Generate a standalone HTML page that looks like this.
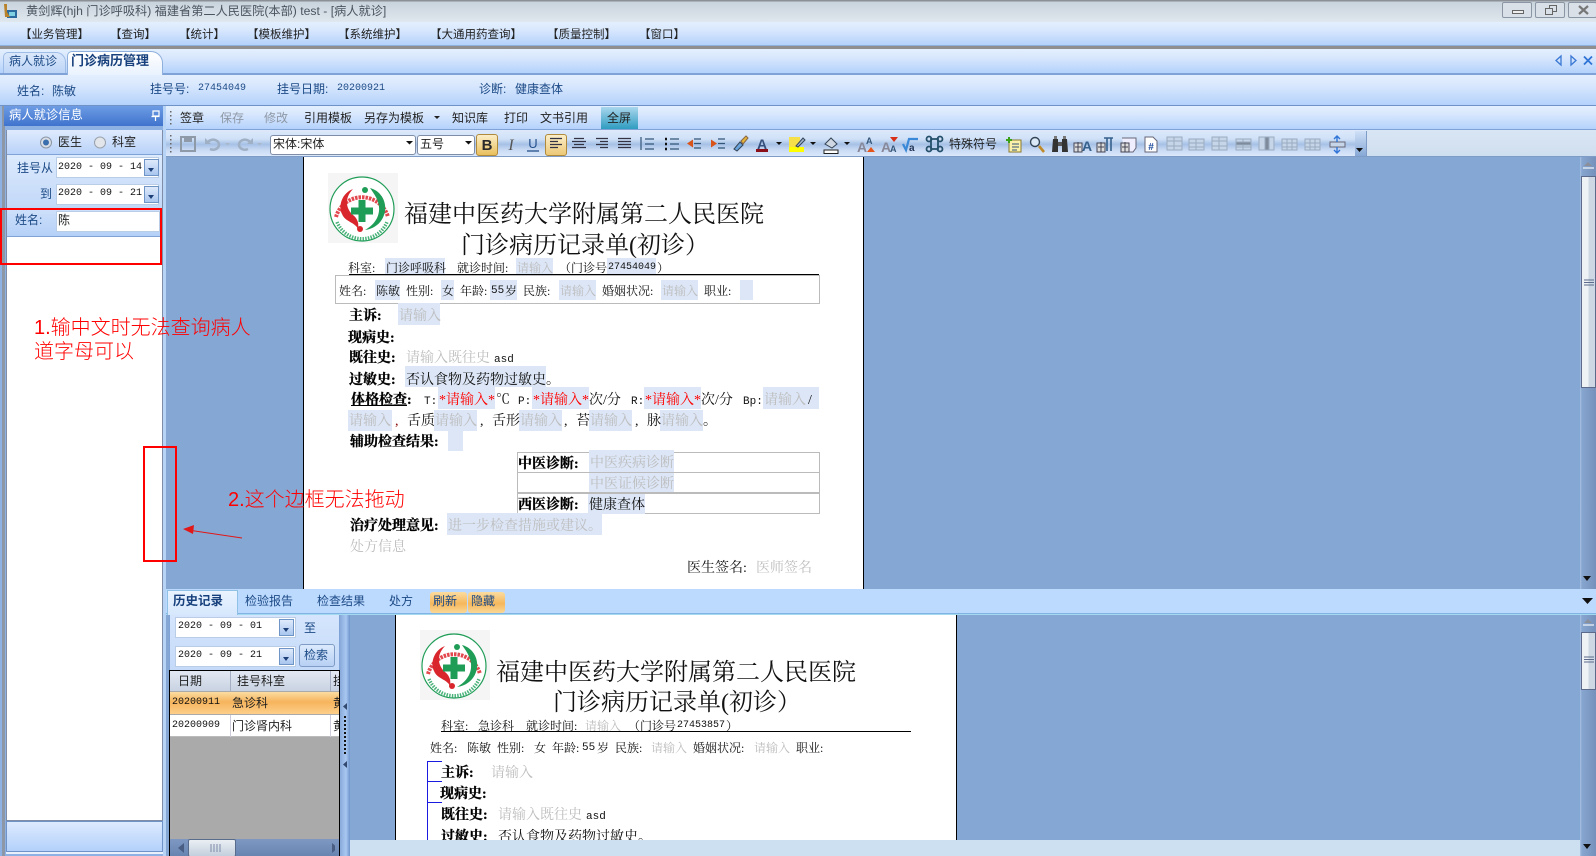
<!DOCTYPE html>
<html lang="zh-CN"><head><meta charset="utf-8"><title>病人就诊</title>
<style>
html,body{margin:0;padding:0;width:1596px;height:856px;overflow:hidden;background:#85a7d4}
body{position:relative;font-family:"Liberation Sans","Noto Sans CJK SC",sans-serif;font-size:12px;color:#000}
.b{position:absolute}
.t{position:absolute;white-space:nowrap;line-height:20px;height:20px;font-family:"Liberation Serif","Noto Serif CJK SC",serif;font-size:12px;color:#111}
.u{font-family:"Liberation Sans","Noto Sans CJK SC",sans-serif;color:#222}
.n{font-family:"Liberation Mono",monospace;font-size:10px}
.bl{color:#1c4a86}
.d{font-size:14px}
.h{font-weight:700;font-size:14px;color:#000;-webkit-text-stroke:.3px #000}
.g{color:#bdbdbd}
.hl{position:absolute;background:#dce6f6}
.r{color:#f00}
.ttl{font-size:24px;line-height:30px;height:30px;color:#111}
.doc .t{margin-top:2px}
.doc .t.m1{margin-top:1px}
.an{position:absolute;white-space:nowrap;color:#f00;font-size:20px;line-height:24px;font-family:"Liberation Sans","Noto Sans CJK SC",sans-serif;font-weight:300}
.date{position:absolute;background:#fff;border:1px solid #b9cde6;box-sizing:border-box}
.drop{position:absolute;width:15px;background:linear-gradient(#dfeafb,#a9c6ef);border:1px solid #6f94c6;box-sizing:border-box}
.drop:after{content:"";position:absolute;left:3px;top:8px;border:3.5px solid transparent;border-top:4px solid #1d3f78;border-bottom:0}
.bar{background:linear-gradient(#e3effe,#dbe9fd 30%,#b4d2fc)}
.m{font-size:11.5px;top:25px}
</style></head><body>

<!-- title bar -->
<div class="b" style="left:0;top:0;width:1596px;height:22px;background:linear-gradient(#8b9096 0,#8b9096 1px,#c9d3dc 2px,#e0e7ee 100%)"></div>
<svg class="b" style="left:2px;top:3px" width="16" height="16"><rect x="5" y="7" width="10" height="8" fill="#2a6a9e"/><rect x="7" y="9" width="6" height="4" fill="#7fd0e0"/><path d="M2 1l3 0 0 8 3 5-5 0z" fill="#b8832a"/></svg>
<div class="t u" style="left:26px;top:1px;font-size:12.2px;color:#4a5560">黄剑辉(hjh 门诊呼吸科) 福建省第二人民医院(本部) test - [病人就诊]</div>
<div class="b" style="left:1502px;top:2px;width:30px;height:16px;border:1px solid #8a96a4;border-radius:2px;background:#d9e0e7;box-sizing:border-box"><div class="b" style="left:9px;top:7px;width:10px;height:2px;border:1px solid #666;background:#eee"></div></div>
<div class="b" style="left:1535px;top:2px;width:30px;height:16px;border:1px solid #8a96a4;border-radius:2px;background:#d9e0e7;box-sizing:border-box"><div class="b" style="left:13px;top:2px;width:6px;height:5px;border:1.5px solid #666"></div><div class="b" style="left:9px;top:5px;width:6px;height:5px;border:1.5px solid #666;background:#d9e0e7"></div></div>
<div class="b" style="left:1568px;top:2px;width:29px;height:16px;border:1px solid #8a96a4;border-radius:2px;background:#d9e0e7;box-sizing:border-box"><svg class="b" style="left:9px;top:2px" width="11" height="10"><path d="M1 1l9 8M10 1L1 9" stroke="#777" stroke-width="2.200"/></svg></div>

<!-- menu -->
<div class="b bar" style="left:0;top:22px;width:1596px;height:24px;border-bottom:1px solid #8fb0dc;box-sizing:border-box"></div>
<div class="b" style="left:0;top:46px;width:1596px;height:3px;background:#8f8f8f"></div>
<div class="t u m" style="left:20px">【业务管理】</div>
<div class="t u m" style="left:110px">【查询】</div>
<div class="t u m" style="left:179px">【统计】</div>
<div class="t u m" style="left:247px">【模板维护】</div>
<div class="t u m" style="left:338px">【系统维护】</div>
<div class="t u m" style="left:430px">【大通用药查询】</div>
<div class="t u m" style="left:547px">【质量控制】</div>
<div class="t u m" style="left:639px">【窗口】</div>

<!-- tab strip -->
<div class="b bar" style="left:0;top:49px;width:1596px;height:24px"></div>
<div class="b" style="left:0;top:73px;width:1596px;height:2px;background:#7fa3d6"></div>
<div class="b" style="left:3px;top:52px;width:63px;height:21px;border:1px solid #9dbce6;border-bottom:0;border-radius:5px 10px 0 0;background:linear-gradient(#dbe8fb,#bdd5f7);box-sizing:border-box"></div>
<div class="b" style="left:67px;top:51px;width:96px;height:24px;border:1px solid #8fb0dc;border-bottom:0;border-radius:5px 12px 0 0;background:linear-gradient(#fff,#e9f2fe);box-sizing:border-box"></div>
<div class="t u bl" style="left:9px;top:51px;font-size:12px">病人就诊</div>
<div class="t u bl" style="left:71px;top:51px;font-size:13px;font-weight:700;color:#17407c">门诊病历管理</div>
<svg class="b" style="left:1552px;top:54px" width="42" height="13"><path d="M9 2L4 6.500 9 11z" fill="none" stroke="#3a78d4" stroke-width="1.300"/><path d="M19 2l5 4.500-5 4.500z" fill="none" stroke="#3a78d4" stroke-width="1.300"/><path d="M32 2.500l8 8M40 2.500l-8 8" stroke="#2f74d6" stroke-width="1.800"/></svg>

<!-- info bar -->
<div class="b bar" style="left:0;top:75px;width:1596px;height:30px"></div>
<div class="b" style="left:0;top:105px;width:1596px;height:1px;background:#6f93c6"></div>
<div class="t u bl" style="left:17px;top:81px">姓名:</div><div class="t u bl" style="left:52px;top:81px">陈敏</div>
<div class="t u bl" style="left:150px;top:79px">挂号号:</div><div class="t n bl" style="left:198px;top:79px">27454049</div>
<div class="t u bl" style="left:277px;top:79px">挂号日期:</div><div class="t n bl" style="left:337px;top:79px">20200921</div>
<div class="t u bl" style="left:479px;top:79px">诊断:</div><div class="t u bl" style="left:515px;top:79px">健康查体</div>

<!-- left panel -->
<div class="b" style="left:0;top:106px;width:166px;height:750px;background:#8db1e3"></div>
<div class="b" style="left:2px;top:106px;width:3px;height:750px;background:#8e97a6"></div>
<div class="b" style="left:4px;top:106px;width:161px;height:20px;background:linear-gradient(#6d9ce4,#3f73cd)"></div>
<div class="t u" style="left:9px;top:105px;font-size:12.300px;color:#fff">病人就诊信息</div>
<svg class="b" style="left:150px;top:109px" width="11" height="13"><path d="M3 2h6v5H3zM1.500 7.500h8M5.500 8v4" stroke="#fff" fill="none" stroke-width="1.200"/></svg>
<div class="b" style="left:6px;top:130px;width:157px;height:691px;background:#fff;border:1px solid #7f8ea6;box-sizing:border-box"></div>
<div class="b" style="left:7px;top:130px;width:155px;height:25px;background:linear-gradient(#dfeafd,#b9d3f9);border-bottom:1px solid #7fa3d6;box-sizing:border-box"></div>
<div class="b" style="left:7px;top:155px;width:155px;height:53px;background:linear-gradient(#dceafd,#c2d8f8)"></div>
<div class="b" style="left:7px;top:208px;width:155px;height:29px;background:linear-gradient(#cfe1fb,#b5d0f7);border-bottom:1px solid #7fa3d6;box-sizing:border-box"></div>
<svg class="b" style="left:39px;top:135px" width="70" height="15"><circle cx="7" cy="7.500" r="5.500" fill="#d8dee6" stroke="#8a96a6"/><circle cx="7" cy="7.500" r="3" fill="#3a6fae"/><circle cx="61" cy="7.500" r="5.500" fill="#e2e5e9" stroke="#9aa2ac"/></svg>
<div class="t u" style="left:58px;top:132px">医生</div>
<div class="t u" style="left:112px;top:132px">科室</div>
<div class="t u bl" style="left:17px;top:158px">挂号从</div>
<div class="date" style="left:56px;top:157px;width:103px;height:21px"></div><div class="drop" style="left:144px;top:159px;height:17px"></div>
<div class="t n" style="left:58px;top:158px">2020 - 09 - 14</div>
<div class="t u bl" style="left:40px;top:184px">到</div>
<div class="date" style="left:56px;top:184px;width:103px;height:21px"></div><div class="drop" style="left:144px;top:186px;height:17px"></div>
<div class="t n" style="left:58px;top:184px">2020 - 09 - 21</div>
<div class="t u bl" style="left:15px;top:210px">姓名:</div>
<div class="date" style="left:56px;top:211px;width:104px;height:21px"></div>
<div class="t u" style="left:58px;top:210px">陈</div>
<div class="b" style="left:6px;top:821px;width:157px;height:31px;background:linear-gradient(#ddeafe,#b3d1fb);border:1px solid #6f93c6;box-sizing:border-box"></div>
<div class="b" style="left:6px;top:852px;width:157px;height:2px;background:#e7f0fb"></div>
<div class="b" style="left:163px;top:106px;width:3px;height:750px;background:#b7d3f5"></div>

<!-- toolbars -->
<div class="b bar" style="left:166px;top:106px;width:1430px;height:24px;border-bottom:1px solid #7fa3d6;box-sizing:border-box"></div>
<div class="b" style="left:166px;top:130px;width:1430px;height:27px;background:linear-gradient(#d8e5f4,#d0dfef);border-bottom:1px solid #7f9cc6;box-sizing:border-box"></div>
<div class="b" style="left:166px;top:130px;width:1200px;height:27px;background:linear-gradient(#deeafb 0,#cfe0f7 35%,#a6c1e6 55%,#c7d9f3 75%,#dbe8fb 100%);border-bottom:1px solid #7f9cc6;box-sizing:border-box"></div>
<div class="b" style="left:1355px;top:131px;width:11px;height:25px;background:linear-gradient(#cfe0f7,#86a8d6);border-right:1px solid #7f9cc6"></div>
<div class="b" style="left:601px;top:107px;width:37px;height:22px;background:linear-gradient(#a9d6ee,#2f9cc0)"></div>
<div class="t u" style="left:180px;top:108px">签章</div>
<div class="t u" style="left:220px;top:108px;color:#8e98a6">保存</div>
<div class="t u" style="left:264px;top:108px;color:#8e98a6">修改</div>
<div class="t u" style="left:304px;top:108px">引用模板</div>
<div class="t u" style="left:364px;top:108px">另存为模板</div>
<div class="t u" style="left:452px;top:108px">知识库</div>
<div class="t u" style="left:504px;top:108px">打印</div>
<div class="t u" style="left:540px;top:108px">文书引用</div>
<div class="t u" style="left:607px;top:108px">全屏</div>

<div class="b" style="left:270px;top:135px;width:146px;height:20px;background:#fff;border:1px solid #7f8ea6;border-radius:3px;box-sizing:border-box"></div>
<div class="b" style="left:417px;top:135px;width:58px;height:20px;background:#fff;border:1px solid #7f8ea6;border-radius:3px;box-sizing:border-box"></div>
<div class="t u" style="left:273px;top:134px">宋体:宋体</div>
<div class="t u" style="left:420px;top:134px">五号</div>
<div class="t u" style="left:949px;top:134px">特殊符号</div>
<div class="b" style="left:476px;top:134px;width:22px;height:22px;background:linear-gradient(#fbeec8,#e9bf5d);border:1px solid #b08a3c;border-radius:3px;box-sizing:border-box"></div>
<div class="b" style="left:545px;top:134px;width:22px;height:22px;background:linear-gradient(#fbeec8,#ecc877);border:1px solid #b08a3c;border-radius:3px;box-sizing:border-box"></div>
<svg class="b" style="left:166px;top:106px" width="1200" height="51" fill="none" shape-rendering="geometricPrecision">
<g fill="#666"><rect x="4" y="5" width="1.500" height="1.500"/><rect x="4" y="9" width="1.500" height="1.500"/><rect x="4" y="13" width="1.500" height="1.500"/><rect x="4" y="17" width="1.500" height="1.500"/><rect x="4" y="29" width="1.500" height="1.500"/><rect x="4" y="33" width="1.500" height="1.500"/><rect x="4" y="37" width="1.500" height="1.500"/><rect x="4" y="41" width="1.500" height="1.500"/><rect x="4" y="45" width="1.500" height="1.500"/></g>
<path d="M268 10l3 3 3-3z" fill="#222"/>
<path d="M240 35l3.500 3.500 3.500-3.500z M299 35l3.500 3.500 3.500-3.500z" fill="#111"/>
<!-- save undo redo -->
<g transform="translate(22,38)"><rect x="-7" y="-7" width="14" height="14" stroke="#8f9aa8" stroke-width="2"/><rect x="-4" y="-7" width="8" height="5" fill="#8f9aa8"/></g>
<g transform="translate(47,38)"><path d="M-5 -2a6 5 0 1 1 2 7" stroke="#9fb0c4" stroke-width="2.500"/><path d="M-8-6v6h6z" fill="#9fb0c4"/></g>
<path d="M59 37l2.500 2.500 2.500-2.500z M91 37l2.500 2.500 2.500-2.500z" fill="#aab8ca"/>
<g transform="translate(79,38)"><path d="M5 -2a6 5 0 1 0 -2 7" stroke="#9fb0c4" stroke-width="2.500"/><path d="M8-6v6h-6z" fill="#9fb0c4"/></g>
<!-- B I U -->
<text x="321" y="44" text-anchor="middle" font-family="Liberation Sans" font-weight="700" font-size="15" fill="#2a2a2a">B</text>
<text x="345" y="44" text-anchor="middle" font-family="Liberation Serif" font-style="italic" font-size="16" fill="#555">I</text>
<text x="367" y="42" text-anchor="middle" font-family="Liberation Sans" font-size="13" fill="#24508c">U</text><path d="M361 45h12" stroke="#24508c" stroke-width="1.300"/>
<!-- alignment -->
<g stroke-width="1.200" stroke="#334">
<path d="M384 32.500h12M384 35.500h8M384 38.500h12M384 41.500h8"/>
<path d="M408 32.500h10M406 35.500h14M408 38.500h10M406 41.500h14" transform="translate(0,0)"/>
<path d="M430 32.500h12M434 35.500h8M430 38.500h12M434 41.500h8"/>
<path d="M452 32.500h13M452 35.500h13M452 38.500h13M452 41.500h13"/>
<path d="M475 31v13M479 33h9M479 38h9M479 43h9" stroke="#357"/>
<path d="M499 33h2M499 38h2M499 43h2" stroke="#111" stroke-width="2.400"/><path d="M504 33h9M504 38h9M504 43h9" stroke="#357"/>
</g>
<path d="M521 37.500l6-4v8z" fill="#d9541a"/><path d="M528 33h7M528 37.500h7M528 42h7" stroke="#357" stroke-width="1.200"/>
<path d="M551 37.500l-6-4v8z" fill="#d9541a"/><path d="M552 33h7M552 37.500h7M552 42h7" stroke="#357" stroke-width="1.200"/>
<!-- brush -->
<path d="M568 43l6-7 3 3-6 6z" fill="#6aa4dc" stroke="#345"/><path d="M575 35l5-5 2 2-5 6z" fill="#e5b53a" stroke="#864"/>
<!-- font colour A -->
<text x="596" y="43" text-anchor="middle" font-family="Liberation Sans" font-weight="700" font-size="14" fill="#35507c">A</text><rect x="590" y="43" width="12" height="3" fill="#8a0f18"/><path d="M610 36l3 3 3-3z" fill="#111"/>
<!-- highlighter -->
<rect x="623" y="31" width="11" height="10" fill="#f5e04a"/><rect x="623" y="41" width="15" height="5" fill="#ffff00"/><path d="M630 40l7-8 2 2-7 7z" fill="#9fb4cf" stroke="#345"/><path d="M644 36l3 3 3-3z" fill="#111"/>
<!-- fill -->
<path d="M659 38l6-6 6 6-5 4z" fill="#cfd8e2" stroke="#345"/><rect x="658" y="44" width="14" height="3.500" fill="#fff" stroke="#222"/><path d="M678 36l3 3 3-3z" fill="#111"/>
<g font-family="Liberation Sans" font-weight="700">
<!-- AA up -->
<text x="691" y="46" font-size="14" fill="#889">A</text><text x="700" y="38" font-size="9" fill="#357">A</text><path d="M701 46l4-5 4 5z" fill="#e5551a"/>
<!-- AA down -->
<text x="715" y="46" font-size="14" fill="#889">A</text><text x="724" y="46" font-size="9" fill="#357">A</text><path d="M724 31h8l-4 5z" fill="#d83018"/>
<!-- sqrt -->
<path d="M737 38l3 6 3-11h9" stroke="#3a88d8" stroke-width="2.200"/><text x="743" y="45" font-size="10" fill="#235">a</text>
<!-- cmd -->
<g stroke="#24506c" stroke-width="1.800"><circle cx="763" cy="33" r="2.500"/><circle cx="774" cy="33" r="2.500"/><circle cx="763" cy="43" r="2.500"/><circle cx="774" cy="43" r="2.500"/><path d="M765 33h7v10h-7z"/></g>
</g>
<!-- note -->
<g transform="translate(848,38)"><rect x="-5" y="-4" width="12" height="12" fill="#fbf1a8" stroke="#8a7a30"/><path d="M-2 0h7M-2 3h7M-2 6h5" stroke="#357"/><path d="M-8-4h6M-5-7v6" stroke="#3aa018" stroke-width="2"/></g>
<!-- magnifier -->
<g transform="translate(870,38)"><circle cx="-1" cy="-2" r="4.500" fill="#dbe9f7" stroke="#345" stroke-width="1.400"/><path d="M3 2l5 6" stroke="#c08a28" stroke-width="2.600"/></g>
<!-- binoculars -->
<g transform="translate(894,38)"><path d="M-7-5h5v13h-6zM2-5h5l1 13h-6z" fill="#333"/><rect x="-2" y="-2" width="4" height="4" fill="#555"/><rect x="-6" y="-8" width="3" height="3" fill="#777"/><rect x="3" y="-8" width="3" height="3" fill="#777"/></g>
<!-- cell A -->
<g transform="translate(916,38)"><rect x="-8" y="-1" width="8" height="9" fill="#ddd" stroke="#445"/><path d="M-4-2v10M-7 3h6" stroke="#445"/><text x="0" y="7" font-family="Liberation Sans" font-weight="700" font-size="14" fill="#35608c">A</text></g>
<!-- para -->
<g transform="translate(939,38)"><rect x="-8" y="-1" width="8" height="9" fill="#ddd" stroke="#445"/><path d="M-4-2v10M-7 3h6" stroke="#445"/><path d="M-1-6h9M2-6v13M6-6v13" stroke="#35608c" stroke-width="1.600"/></g>
<!-- page -->
<g transform="translate(963,38)"><path d="M-7-6h14v10l-3 4h-8" fill="#eef" stroke="#667"/><rect x="-8" y="-1" width="8" height="9" fill="#ddd" stroke="#445"/><path d="M-4-2v10M-7 3h6" stroke="#445"/></g>
<!-- page # -->
<g transform="translate(985,38)"><path d="M-6-7h8l4 4v11h-12z" fill="#fff" stroke="#667"/><text x="0" y="6" text-anchor="middle" font-family="Liberation Sans" font-weight="700" font-size="10" fill="#1c4a9c">#</text></g>
<!-- table icons disabled -->
<g stroke="#9aabc0" fill="#c6d5e8">
<g transform="translate(1009,38)"><rect x="-8" y="-7" width="15" height="13"/><path d="M-8-3h15M-8 2h15M-1-7v13"/></g>
<g transform="translate(1031,38)"><rect x="-8" y="-5" width="15" height="11"/><path d="M-8-1h15M-8 3h15M-1-5v11"/></g>
<g transform="translate(1054,38)"><rect x="-8" y="-7" width="15" height="13"/><path d="M-8-3h15M-8 2h15M-1-7v13"/></g>
<g transform="translate(1078,38)"><rect x="-8" y="-5" width="15" height="11"/><path d="M-8 3h15M-1-5v11"/><rect x="-8" y="-2" width="15" height="3" fill="#7e8b9c"/></g>
<g transform="translate(1101,38)"><rect x="-8" y="-7" width="15" height="13"/><rect x="-2" y="-7" width="4" height="13" fill="#7e8b9c"/></g>
<g transform="translate(1124,38)"><rect x="-8" y="-5" width="15" height="11"/><path d="M-8-1h15M-8 3h15M-3-5v11M2-5v11"/></g>
<g transform="translate(1147,38)"><rect x="-8" y="-5" width="15" height="11"/><path d="M-8-1h15M-8 3h15M-3-5v11M2-5v11"/></g>
</g>
<!-- row height -->
<g transform="translate(1171,38)"><rect x="-7" y="-2" width="15" height="5" fill="#c6d5e8" stroke="#667"/><path d="M0-8v6M0 3v6M-3-5l3-3 3 3M-3 6l3 3 3-3" stroke="#2f74d6" stroke-width="1.400"/></g>
<path d="M1190 42h7l-3.500 4z" fill="#111"/>
</svg>

<!-- main doc -->
<div class="b" style="left:166px;top:157px;width:1414px;height:432px;background:#85a7d4"></div>
<div class="b" style="left:303px;top:157px;width:561px;height:432px;background:#fff;border-left:1px solid #000;border-right:1px solid #000;box-sizing:border-box"></div>

<svg width="0" height="0" style="position:absolute"><defs>
<symbol id="logo" viewBox="0 0 70 70"><rect width="70" height="70" fill="#f5f5f5"/><circle cx="34" cy="36" r="32" fill="#fff" stroke="#1f9d57" stroke-width="1.200"/><path d="M8 44A27 27 0 0 1 60 44" fill="none" stroke="#e2484e" stroke-width="4" stroke-dasharray="2.500 1"/><path d="M9 49A27 27 0 0 0 59 49" fill="none" stroke="#4bb27b" stroke-width="3.500" stroke-dasharray="1.500 1.200"/><path d="M25 16C14 20 10 33 14 41c3 8 13 8 16 15 1-5 0-10-5-14-7-6-9-17 0-26z" fill="#d8262c"/><circle cx="32" cy="56" r="3" fill="#d8262c"/><path d="M42 15c12 3 18 16 14 27-3 9-11 14-19 15 7-4 13-10 14-19 1-9-4-16-9-23z" fill="#1f9d57"/><circle cx="37" cy="17" r="3" fill="#1f9d57"/><path d="M30.500 27h7v7.500H45v7h-7.500V49h-7v-7.500H23v-7h7.500z" fill="#1f9d57"/></symbol>
</defs></svg>

<svg class="b" style="left:328px;top:173px" width="70" height="70"><use href="#logo"/></svg>

<div class="doc">
<div class="t ttl" style="left:404px;top:198px">福建中医药大学附属第二人民医院</div>
<div class="t ttl" style="left:461px;top:229px">门诊病历记录单(初诊）</div>

<div class="hl" style="left:385px;top:258px;width:60px;height:16px"></div>
<div class="hl" style="left:516px;top:258px;width:37px;height:16px"></div>
<div class="hl" style="left:607px;top:258px;width:49px;height:16px"></div>
<div class="t m1" style="left:348px;top:257px">科室:</div>
<div class="t m1" style="left:386px;top:257px">门诊呼吸科</div>
<div class="t m1" style="left:457px;top:257px">就诊时间:</div>
<div class="t g m1" style="left:517px;top:257px">请输入</div>
<div class="t m1" style="left:559px;top:257px">（门诊号</div>
<div class="t n m1" style="left:608px;top:257px">27454049</div>
<div class="t m1" style="left:657px;top:257px">）</div>
<div class="b" style="left:349px;top:274px;width:470px;height:1px;background:#000"></div>
<div class="b" style="left:335px;top:275px;width:485px;height:29px;border:1px solid #bbb;box-sizing:border-box"></div>
<div class="hl" style="left:375px;top:280px;width:25px;height:20px"></div>
<div class="hl" style="left:441px;top:280px;width:13px;height:20px"></div>
<div class="hl" style="left:490px;top:280px;width:27px;height:20px"></div>
<div class="hl" style="left:559px;top:280px;width:37px;height:20px"></div>
<div class="hl" style="left:661px;top:280px;width:37px;height:20px"></div>
<div class="hl" style="left:740px;top:280px;width:13px;height:20px"></div>
<div class="t m1" style="left:339px;top:280px">姓名:</div><div class="t m1" style="left:376px;top:280px">陈敏</div>
<div class="t m1" style="left:406px;top:280px">性别:</div><div class="t m1" style="left:442px;top:280px">女</div>
<div class="t m1" style="left:460px;top:280px">年龄:</div><div class="t n m1" style="left:491px;top:280px;font-size:11px">55</div><div class="t m1" style="left:505px;top:280px">岁</div>
<div class="t m1" style="left:523px;top:280px">民族:</div><div class="t g m1" style="left:560px;top:280px">请输入</div>
<div class="t m1" style="left:602px;top:280px">婚姻状况:</div><div class="t g m1" style="left:662px;top:280px">请输入</div>
<div class="t m1" style="left:704px;top:280px">职业:</div>

<div class="hl" style="left:398px;top:303px;width:42px;height:22px"></div>
<div class="t h" style="left:349px;top:305px">主诉:</div><div class="t d g" style="left:399px;top:305px">请输入</div>
<div class="t h" style="left:348px;top:327px">现病史:</div>
<div class="t h" style="left:349px;top:347px">既往史:</div><div class="t d g" style="left:406px;top:347px">请输入既往史</div><div class="t n" style="left:494px;top:348px;font-size:11px">asd</div>
<div class="hl" style="left:405px;top:366px;width:141px;height:21px"></div>
<div class="t h" style="left:349px;top:369px">过敏史:</div><div class="t d" style="left:406px;top:369px">否认食物及药物过敏史。</div>

<div class="hl" style="left:438px;top:387px;width:57px;height:22px"></div>
<div class="hl" style="left:532px;top:387px;width:57px;height:22px"></div>
<div class="hl" style="left:644px;top:387px;width:57px;height:22px"></div>
<div class="hl" style="left:763px;top:387px;width:56px;height:22px"></div>
<div class="t h" style="left:351px;top:389px;text-decoration:underline">体格检查</div><div class="t h" style="left:407px;top:389px">:</div>
<div class="t n" style="left:424px;top:390px;font-size:11px">T:</div><div class="t d r" style="left:439px;top:389px">*请输入*</div><div class="t d" style="left:496px;top:389px">℃</div>
<div class="t n" style="left:518px;top:390px;font-size:11px">P:</div><div class="t d r" style="left:533px;top:389px">*请输入*</div><div class="t d" style="left:589px;top:389px">次/分</div>
<div class="t n" style="left:631px;top:390px;font-size:11px">R:</div><div class="t d r" style="left:645px;top:389px">*请输入*</div><div class="t d" style="left:701px;top:389px">次/分</div>
<div class="t n" style="left:743px;top:390px;font-size:11px">Bp:</div><div class="t d g" style="left:764px;top:389px">请输入</div><div class="t d" style="left:808px;top:389px">/</div>

<div class="hl" style="left:348px;top:410px;width:44px;height:21px"></div>
<div class="hl" style="left:434px;top:410px;width:43px;height:21px"></div>
<div class="hl" style="left:519px;top:410px;width:43px;height:21px"></div>
<div class="hl" style="left:589px;top:410px;width:43px;height:21px"></div>
<div class="hl" style="left:660px;top:410px;width:43px;height:21px"></div>
<div class="t d g" style="left:349px;top:410px">请输入</div><div class="t d" style="left:395px;top:410px;color:#800">,</div><div class="t d" style="left:407px;top:410px">舌质</div>
<div class="t d g" style="left:435px;top:410px">请输入</div><div class="t d" style="left:480px;top:410px">,</div><div class="t d" style="left:492px;top:410px">舌形</div>
<div class="t d g" style="left:520px;top:410px">请输入</div><div class="t d" style="left:564px;top:410px">,</div><div class="t d" style="left:576px;top:410px">苔</div>
<div class="t d g" style="left:590px;top:410px">请输入</div><div class="t d" style="left:635px;top:410px">,</div><div class="t d" style="left:647px;top:410px">脉</div>
<div class="t d g" style="left:661px;top:410px">请输入</div><div class="t d" style="left:703px;top:410px">。</div>

<div class="hl" style="left:448px;top:430px;width:15px;height:21px"></div>
<div class="t h" style="left:350px;top:431px">辅助检查结果:</div>

<div class="b" style="left:517px;top:452px;width:303px;height:62px;border:1px solid #bbb;box-sizing:border-box"></div>
<div class="b" style="left:517px;top:472px;width:303px;height:1px;background:#bbb"></div>
<div class="b" style="left:517px;top:492px;width:303px;height:2px;background:#bbb"></div>
<div class="hl" style="left:589px;top:450px;width:85px;height:22px"></div>
<div class="hl" style="left:589px;top:473px;width:85px;height:19px"></div>
<div class="hl" style="left:588px;top:494px;width:57px;height:20px"></div>
<div class="t h" style="left:518px;top:453px">中医诊断:</div><div class="t d g" style="left:590px;top:452px">中医疾病诊断</div>
<div class="t d g" style="left:590px;top:473px">中医证候诊断</div>
<div class="t h" style="left:518px;top:494px">西医诊断:</div><div class="t d" style="left:589px;top:494px">健康查体</div>

<div class="hl" style="left:447px;top:513px;width:155px;height:22px"></div>
<div class="t h" style="left:350px;top:515px">治疗处理意见:</div><div class="t d g" style="left:448px;top:515px">进一步检查措施或建议。</div>
<div class="t d g" style="left:350px;top:536px">处方信息</div>
<div class="t d" style="left:687px;top:557px">医生签名:</div><div class="t d g" style="left:756px;top:557px">医师签名</div>
</div>

<!-- right scrollbar top -->
<div class="b" style="left:1580px;top:157px;width:16px;height:432px;background:linear-gradient(90deg,#a9c2e4 0,#86a5cf 2px,#7591bb)"></div>
<svg class="b" style="left:1582px;top:160px" width="13" height="10"><path d="M2 6l4-4 4 4z" fill="#8a8f99"/><path d="M1 8h11" stroke="#f4f7fb" stroke-width="1.200"/></svg>
<div class="b" style="left:1581px;top:176px;width:15px;height:212px;border:1px solid #5c6b8c;background:linear-gradient(90deg,#eef2f5 50%,#cdd8e4 50%);box-sizing:border-box"></div>
<svg class="b" style="left:1584px;top:279px" width="11" height="9"><path d="M0 1h10M0 3.500h10M0 6h10" stroke="#5c6b8c" stroke-width="1"/></svg>
<svg class="b" style="left:1582px;top:575px" width="12" height="8"><path d="M1 1h8L5 6z" fill="#111"/></svg>

<!-- bottom tab strip -->
<div class="b" style="left:166px;top:589px;width:1430px;height:24px;background:#bcd9fe"></div>
<div class="b" style="left:166px;top:613px;width:1430px;height:2px;background:linear-gradient(#6f9fdc,#b6eef7)"></div>
<div class="b" style="left:167px;top:590px;width:71px;height:25px;background:linear-gradient(#eaf3ff,#d7e8fd);border:1px solid #8fc0e6;border-bottom:0;box-sizing:border-box"></div>
<div class="b" style="left:430px;top:592px;width:37px;height:21px;background:linear-gradient(#fbdca0,#f5b75c 55%,#fbd896);border-radius:3px"></div>
<div class="b" style="left:468px;top:592px;width:37px;height:21px;background:linear-gradient(#fbdca0,#f5b75c 55%,#fbd896);border-radius:3px"></div>
<div class="t u bl" style="left:173px;top:591px;font-weight:700;font-size:12.500px;color:#17407c">历史记录</div>
<div class="t u bl" style="left:245px;top:591px">检验报告</div>
<div class="t u bl" style="left:317px;top:591px">检查结果</div>
<div class="t u bl" style="left:389px;top:591px">处方</div>
<div class="t u bl" style="left:433px;top:591px">刷新</div>
<div class="t u bl" style="left:471px;top:591px">隐藏</div>
<svg class="b" style="left:1581px;top:597px" width="14" height="9"><path d="M1 1h11L6.500 7z" fill="#111"/></svg>

<!-- history left -->
<div class="b" style="left:166px;top:615px;width:184px;height:241px;background:#85a7d4"></div>
<div class="b" style="left:169px;top:615px;width:171px;height:56px;background:linear-gradient(#d5e5fc,#c4daf9);border-left:1px solid #7fa3d6;border-right:1px solid #7fa3d6;box-sizing:border-box"></div>
<div class="date" style="left:175px;top:617px;width:121px;height:21px"></div><div class="drop" style="left:279px;top:619px;height:17px"></div>
<div class="t n" style="left:178px;top:617px">2020 - 09 - 01</div>
<div class="t u bl" style="left:304px;top:618px">至</div>
<div class="date" style="left:175px;top:646px;width:121px;height:21px"></div><div class="drop" style="left:279px;top:648px;height:17px"></div>
<div class="t n" style="left:178px;top:646px">2020 - 09 - 21</div>
<div class="b" style="left:299px;top:644px;width:36px;height:23px;background:linear-gradient(#dceafc,#b7d0f4);border:1px solid #7f9cc6;border-radius:3px;box-sizing:border-box"></div>
<div class="t u bl" style="left:304px;top:645px">检索</div>
<div class="b" style="left:169px;top:670px;width:171px;height:186px;background:#aaa;border:1px solid #000;border-bottom:0;box-sizing:border-box;overflow:hidden">
 <div class="b" style="left:0;top:0;width:170px;height:20px;background:linear-gradient(#e3e9f3,#c8d2e2)"></div>
 <div class="b" style="left:60px;top:0;width:1px;height:20px;background:#a4afc4"></div>
 <div class="b" style="left:160px;top:0;width:1px;height:20px;background:#a4afc4"></div>
 <div class="b" style="left:0;top:21px;width:170px;height:22px;background:linear-gradient(#fbdca2,#f6b45c 45%,#fdcf8a)"></div>
 <div class="b" style="left:0;top:44px;width:170px;height:22px;background:#fff;border-bottom:1px solid #bbb;box-sizing:border-box"></div>
 <div class="b" style="left:60px;top:44px;width:1px;height:22px;background:#ccd"></div>
 <div class="b" style="left:160px;top:44px;width:1px;height:22px;background:#ccd"></div>
 <div class="t u" style="left:8px;top:0">日期</div><div class="t u" style="left:67px;top:0">挂号科室</div><div class="t u" style="left:163px;top:0">挂</div>
 <div class="t n" style="left:2px;top:22px">20200911</div><div class="t u" style="left:62px;top:22px">急诊科</div><div class="t u" style="left:163px;top:22px">黄</div>
 <div class="t n" style="left:2px;top:45px">20200909</div><div class="t u" style="left:62px;top:45px">门诊肾内科</div><div class="t u" style="left:163px;top:45px">黄</div>
 <div class="b" style="left:0;top:168px;width:170px;height:18px;background:linear-gradient(#7e98c2,#6683b0)"></div>
 <div class="b" style="left:18px;top:168px;width:48px;height:18px;background:linear-gradient(#eaeff4,#c3cfdd);border:1px solid #596c8c;border-radius:2px;box-sizing:border-box"></div>
 <svg class="b" style="left:5px;top:171px" width="160" height="12"><path d="M9 1L3 6l6 5z" fill="#4a5e84"/><path d="M157 1l6 5-6 5z" fill="#4a5e84"/><path d="M36 2v8M39 2v8M42 2v8M45 2v8" stroke="#7b8aa6"/></svg>
</div>
<!-- splitter -->
<div class="b" style="left:340px;top:615px;width:10px;height:241px;background:linear-gradient(90deg,#88a9da,#a9c8f2 60%,#6f95cc)"></div>
<svg class="b" style="left:340px;top:698px" width="10" height="80"><path d="M7 5L3 8.500 7 12z M7 63l-4 3.500L7 70z" fill="#33486e"/><path d="M5 18v40" stroke="#111" stroke-width="2" stroke-dasharray="2 2"/></svg>

<!-- doc 2 -->
<div class="b doc" style="left:350px;top:615px;width:1230px;height:225px;background:#85a7d4;overflow:hidden">
 <div class="b" style="left:45px;top:0;width:562px;height:225px;background:#fff;border-left:1px solid #000;border-right:1px solid #000;box-sizing:border-box"></div>
 <svg class="b" style="left:70px;top:15px" width="70" height="70"><use href="#logo"/></svg>
 <div class="t ttl" style="left:146px;top:41px">福建中医药大学附属第二人民医院</div>
 <div class="t ttl" style="left:203px;top:71px">门诊病历记录单(初诊）</div>
 <div class="t m1" style="left:91px;top:100px">科室:</div><div class="t m1" style="left:128px;top:100px">急诊科</div>
 <div class="t m1" style="left:176px;top:100px">就诊时间:</div><div class="t g m1" style="left:235px;top:100px">请输入</div>
 <div class="t m1" style="left:278px;top:100px">（门诊号</div><div class="t n m1" style="left:327px;top:100px">27453857</div><div class="t m1" style="left:376px;top:100px">）</div>
 <div class="b" style="left:91px;top:116px;width:470px;height:1px;background:#000"></div>
 <div class="t m1" style="left:80px;top:122px">姓名:</div><div class="t m1" style="left:117px;top:122px">陈敏</div>
 <div class="t m1" style="left:147px;top:122px">性别:</div><div class="t m1" style="left:184px;top:122px">女</div>
 <div class="t m1" style="left:202px;top:122px">年龄:</div><div class="t n m1" style="left:232px;top:122px;font-size:11px">55</div><div class="t m1" style="left:247px;top:122px">岁</div>
 <div class="t m1" style="left:265px;top:122px">民族:</div><div class="t g m1" style="left:301px;top:122px">请输入</div>
 <div class="t m1" style="left:343px;top:122px">婚姻状况:</div><div class="t g m1" style="left:404px;top:122px">请输入</div>
 <div class="t m1" style="left:446px;top:122px">职业:</div>
 <div class="b" style="left:77px;top:146px;width:1px;height:79px;background:#1a1ae0"></div>
 <div class="b" style="left:77px;top:146px;width:15px;height:1px;background:#1a1ae0"></div>
 <div class="b" style="left:77px;top:166px;width:15px;height:1px;background:#1a1ae0"></div>
 <div class="b" style="left:77px;top:187px;width:15px;height:1px;background:#1a1ae0"></div>
 <div class="t h" style="left:91px;top:147px">主诉:</div><div class="t d g" style="left:141px;top:147px">请输入</div>
 <div class="t h" style="left:90px;top:168px">现病史:</div>
 <div class="t h" style="left:91px;top:189px">既往史:</div><div class="t d g" style="left:148px;top:189px">请输入既往史</div><div class="t n" style="left:236px;top:190px;font-size:11px">asd</div>
 <div class="t h" style="left:91px;top:211px">过敏史:</div><div class="t d" style="left:148px;top:211px">否认食物及药物过敏史。</div>
</div>
<div class="b" style="left:350px;top:840px;width:1230px;height:16px;background:#cde0f2"></div>

<!-- right scrollbar bottom -->
<div class="b" style="left:1580px;top:615px;width:16px;height:241px;background:linear-gradient(90deg,#a9c2e4 0,#86a5cf 2px,#7591bb)"></div>
<svg class="b" style="left:1582px;top:617px" width="13" height="10"><path d="M2 6l4-4 4 4z" fill="#8a8f99"/><path d="M1 8h11" stroke="#f4f7fb" stroke-width="1.200"/></svg>
<div class="b" style="left:1581px;top:632px;width:15px;height:58px;border:1px solid #5c6b8c;background:linear-gradient(90deg,#eef2f5 50%,#cdd8e4 50%);box-sizing:border-box"></div>
<svg class="b" style="left:1584px;top:656px" width="11" height="9"><path d="M0 1h10M0 3.500h10M0 6h10" stroke="#5c6b8c" stroke-width="1"/></svg>
<svg class="b" style="left:1582px;top:843px" width="12" height="8"><path d="M1 1h8L5 6z" fill="#111"/></svg>

<!-- annotations -->
<div class="b" style="left:0;top:208px;width:162px;height:57px;border:2px solid #f00;box-sizing:border-box"></div>
<div class="b" style="left:143px;top:446px;width:34px;height:116px;border:2px solid #f00;box-sizing:border-box"></div>
<div class="an" style="left:34px;top:316px">1.输中文时无法查询病人</div>
<div class="an" style="left:34px;top:340px">道字母可以</div>
<div class="an" style="left:228px;top:488px">2.这个边框无法拖动</div>
<svg class="b" style="left:180px;top:522px" width="66" height="20"><path d="M62 16L8 8" stroke="#e01818" stroke-width="1"/><path d="M3 7l11-4-1 9z" fill="#e01818"/></svg>
</body></html>
